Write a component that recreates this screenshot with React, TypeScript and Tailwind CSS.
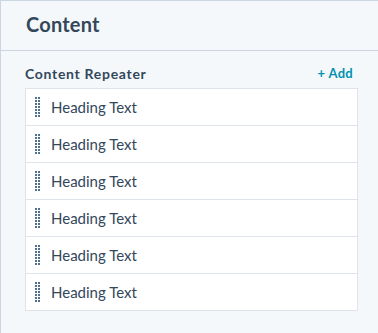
const rows = Array.from({ length: 6 }, (_, i) => i);

function Grip() {
  return (
    <svg width="5" height="22" viewBox="0 0 5 22" className="shrink-0">
      {Array.from({ length: 7 }, (_, r) => (
        <g key={r} fill="#516f90">
          <rect x="0" y={r * 3 + 1} width="2" height="2" />
          <rect x="3" y={r * 3 + 1} width="2" height="2" />
        </g>
      ))}
    </svg>
  );
}

export default function App() {
  return (
    <div className="h-[333px] w-[378px] overflow-hidden border-l border-t border-[#cbd6e2] bg-[#f5f8fa] font-['Lato',sans-serif] text-[#33475b]">
      {/* Header */}
      <div className="flex h-[50px] items-center border-b border-[#cbd6e2] px-[25px] pb-[4px]">
        <h1 className="text-[20px] font-bold leading-none tracking-[0.2px]">Content</h1>
      </div>

      {/* Repeater */}
      <div className="px-[24px] pt-[12px]">
        <div className="flex items-center justify-between pb-[4px]">
          <span className="text-[14px] font-bold tracking-[0.7px]">Content Repeater</span>
          <button className="mr-[1px] text-[13px] font-bold tracking-[0.3px] text-[#0091ae]">+ Add</button>
        </div>
        <ul className="w-[333px] border border-[#dfe3eb] bg-white">
          {rows.map((i) => (
            <li
              key={i}
              className="flex h-[37px] items-center gap-[11px] border-b border-[#dfe3eb] pl-[9px] last:h-[36px] last:border-b-0"
            >
              <Grip />
              <span className="text-[15px] text-[#33475b]">Heading Text</span>
            </li>
          ))}
        </ul>
      </div>
    </div>
  );
}
